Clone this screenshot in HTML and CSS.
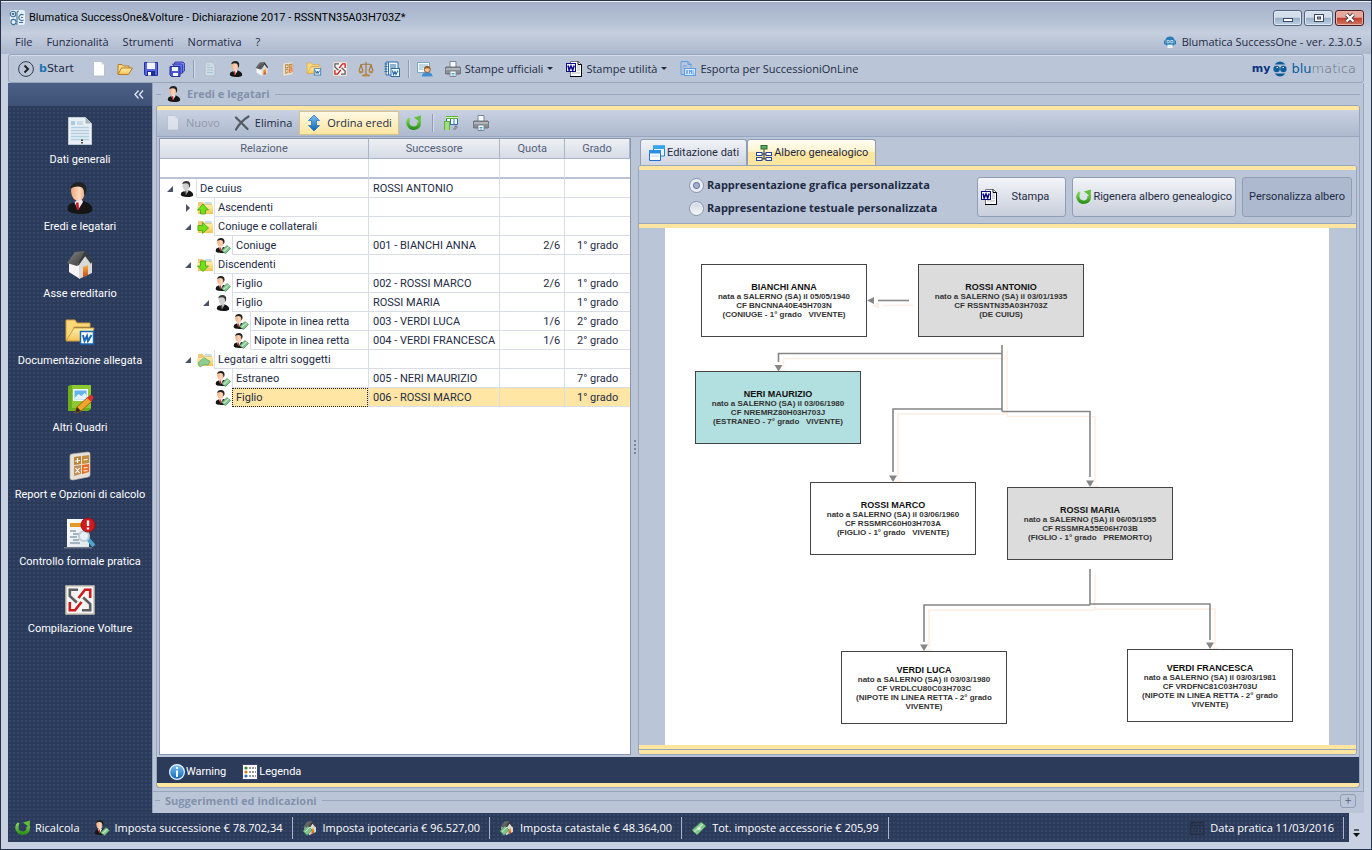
FILE: index.html
```html
<!DOCTYPE html>
<html lang="it">
<head>
  <meta charset="UTF-8" />
  <meta name="viewport" content="width=device-width, initial-scale=1.0"/>
  <title>Blumatica SuccessOne&amp;Volture</title>
  <link rel="stylesheet" href="styles.css">
</head>
<body>

  <!-- icon sprite -->
  <svg class="sprite" aria-hidden="true">
    <defs>
      <linearGradient id="g-skin" x1="0" y1="0" x2="1" y2="0"><stop offset="0" stop-color="#f4a877"/><stop offset=".6" stop-color="#fdd9c0"/><stop offset="1" stop-color="#e9a67c"/></linearGradient>
      <linearGradient id="g-folder" x1="0" y1="0" x2="0" y2="1"><stop offset="0" stop-color="#fff0ae"/><stop offset="1" stop-color="#f3c352"/></linearGradient>
      <linearGradient id="g-green" x1="0" y1="0" x2="0" y2="1"><stop offset="0" stop-color="#8fe05a"/><stop offset="1" stop-color="#1f8a12"/></linearGradient>
      <linearGradient id="g-blue" x1="0" y1="0" x2="0" y2="1"><stop offset="0" stop-color="#7cc4f6"/><stop offset="1" stop-color="#0b63b8"/></linearGradient>
      <linearGradient id="g-page" x1="0" y1="0" x2="1" y2="1"><stop offset="0" stop-color="#ffffff"/><stop offset="1" stop-color="#dfe5ea"/></linearGradient>
      <linearGradient id="g-roof" x1="0" y1="0" x2="1" y2="1"><stop offset="0" stop-color="#8a8a8a"/><stop offset="1" stop-color="#333333"/></linearGradient>
      <linearGradient id="g-orange" x1="0" y1="0" x2="0" y2="1"><stop offset="0" stop-color="#f7b049"/><stop offset="1" stop-color="#c74a0b"/></linearGradient>
    </defs>

    <symbol id="i-app" viewBox="0 0 16 16"><rect x="1" y="0" width="15" height="15" rx="2" fill="#e6eff6"/><g fill="none" stroke="#3f7196" stroke-width="1.100"><circle cx="4" cy="4" r="2.800"/><circle cx="4" cy="4" r=".8"/><circle cx="4.500" cy="12" r="2.600"/><path d="M8 15V3q0-2 2-2M14.500 5a3 3 0 1 0 0 5M14 7.500h-2M14 12.500h-4"/></g></symbol>
    <symbol id="i-page" viewBox="0 0 16 16"><path d="M2.500.500h8l3 3V15h-11z" fill="#fdfdfd" stroke="#b4b9bf" stroke-width=".8"/><path d="M10.500.500v3h3z" fill="#d5d9de"/></symbol>
    <symbol id="i-open" viewBox="0 0 16 16"><path d="M1 13V3.500h4l1.500 1.500H12V7" fill="#fbdc86" stroke="#b97a23"/><path d="M1 13.500 4.500 7H15.500l-4 6.500z" fill="url(#g-folder)" stroke="#b97a23"/></symbol>
    <symbol id="i-save" viewBox="0 0 16 16"><path d="M1.500 1.500h13v13h-12l-1-1z" fill="#5a67dc" stroke="#2331a0"/><path d="M4 1.500h8V8H4z" fill="#f2f5ff"/><path d="M4 10h8v4.500H4z" fill="#202c8c"/><path d="M5 11h3v3.500H5z" fill="#fff"/></symbol>
    <symbol id="i-saveall" viewBox="0 0 16 16"><path d="M6 1h8l1.500 1.500V10L13 12 5 4z" fill="#7b85ea" stroke="#2331a0" stroke-width=".8"/><path d="M3.500 3h9l1 1v8l-3 1z" fill="#6a75e4" stroke="#2331a0" stroke-width=".8"/><path d="M1 5.500h10v10H2.500L1 14z" fill="#4a58d8" stroke="#2331a0"/><path d="M3 6h6v4H3z" fill="#f2f5ff"/><path d="M4 12h5v3H4z" fill="#fff"/></symbol>
    <symbol id="i-data" viewBox="-4 -2 32 32"><path d="M.5.500h17l6 6v21H.500z" fill="#e9eff3" stroke="#c3ccd2"/><path d="M17.500.500v6h6z" fill="#aab4bb"/><rect x="3" y="4" width="4" height="4" fill="#a9cbe0"/><rect x="9" y="4" width="6" height="4" fill="#c6dbe8"/><path d="M3 10.500h18M3 13.500h18M3 16.500h18M3 19.500h18M3 22.500h18" stroke="#b0cfe1" stroke-width="1.600"/><path d="M14 22.500v1.500m0 1v1.500" stroke="#222" stroke-width="1.600"/></symbol>
    <symbol id="i-data-ghost" viewBox="0 0 16 16"><path d="M3 1h7l3 3v11H3z" fill="#cfdae2" stroke="#a9b8c4" stroke-width=".8"/><path d="M5 4h3M5 6.500h6M5 9h6M5 11.500h6" stroke="#a3c6d8"/></symbol>
    <symbol id="i-person" viewBox="-2 0 30 32"><path d="M.5 27q0-5 5-6L10 19h7l4 2q4.500 2 4.500 7-1 4-12 4Q.5 31.500.500 27z" fill="#151515"/><path d="M7.500 20.500 10 18h5l1 2-5 8z" fill="#ededed"/><path d="M9 20.500h2.500l.5 8-2.500-1.500z" fill="#c4161c"/><path d="M4 9q0-7 7-7t7 7.500q-.5 8-6 10Q4.500 18.500 4 9z" fill="url(#g-skin)"/><path d="M3.500 6.500Q4.500 0 12 0q7.500.3 7.500 7.500 0 4-2.500 6 .5-6-2-8-5-2.500-11.500 1z" fill="#222"/></symbol>
    <symbol id="i-person-gray" viewBox="-2 0 30 32"><path d="M.5 27q0-5 5-6L10 19h7l4 2q4.500 2 4.500 7-1 4-12 4Q.5 31.500.500 27z" fill="#151515"/><path d="M7.500 20.500 10 18h5l1 2-5 8z" fill="#c8c8c8"/><path d="M9 20.500h2.500l.5 8-2.500-1.500z" fill="#444"/><path d="M4 9q0-7 7-7t7 7.500q-.5 8-6 10Q4.500 18.500 4 9z" fill="#cfcfcf"/><path d="M3.500 6.500Q4.500 0 12 0q7.500.3 7.500 7.500 0 4-2.500 6 .5-6-2-8-5-2.500-11.500 1z" fill="#3a3a3a"/></symbol>
    <symbol id="i-cash" viewBox="0 0 16 16"><path d="M1 10 10 2l5 4-9 9z" fill="#82c68c" stroke="#3f8d52" stroke-width=".8"/><path d="M3 12 12 4" stroke="#bfe5c2" stroke-width="1.400"/><circle cx="8" cy="8.500" r="1.800" fill="#d7f0d8"/></symbol>
    <symbol id="i-person-cash" viewBox="0 0 16 16"><use href="#i-person" x="-1" y="0" width="15" height="15"/><path d="m6.500 12.500 5.500-5 3.500 3-5 5z" fill="#7fc28a" stroke="#488f58" stroke-width=".7"/><path d="m8.500 13.500 5-4.500" stroke="#c4e7c8" stroke-width="1.200"/></symbol>
    <symbol id="i-house" viewBox="-3 -1 32 32"><path d="M2 13v9l11 7V13z" fill="#f5f5f5"/><path d="M12 29V14l7-9 6 8v10z" fill="#d9d9d9"/><path d="M16 17l5-2v10l-5 2z" fill="url(#g-orange)"/><path d="M0 13 8 2l10-1-8 15z" fill="url(#g-roof)"/><path d="m18 1 7 10-1 3-6-8-6 9-2 1z" fill="#3c3c3c"/></symbol>
    <symbol id="i-house-cash" viewBox="0 0 16 16"><use href="#i-house" x="0" y="0" width="16" height="16"/><path d="m1 11 5-5 4 4-5 5.500z" fill="#7fc28a" stroke="#488f58" stroke-width=".7"/><path d="m3 12 5-5" stroke="#c4e7c8"/></symbol>
    <symbol id="i-folder-word" viewBox="-1 -3 32 32"><path d="M1 21V1h9l2 3h13v4H9L5 21z" fill="#fbd978" stroke="#d19b3d"/><path d="m1 22 8-13h20l-3 13z" fill="url(#g-folder)" stroke="#d19b3d"/><rect x="15.500" y="12.500" width="13" height="12.500" fill="#fff" stroke="#1767b1" stroke-width="1.500"/><path d="m18 16 1.500 6 2.500-5 1 5 3.500-6" fill="none" stroke="#1767b1" stroke-width="2"/></symbol>
    <symbol id="i-album" viewBox="-3 -1 32 32"><path d="M1 2 4 1h20v24l-3 2H1z" fill="#6fae1b"/><path d="M5 1h19v23H5z" fill="#8cc832"/><rect x="6" y="5" width="15" height="12" fill="#f3f8ff"/><rect x="7.500" y="6.500" width="12" height="9" fill="#61b5ea"/><path d="m7.500 14 4-4 3 2 3-3 2 2v4.500h-12z" fill="#e4f4fd"/><path d="m8 29 2-6 11-10 4 4-11 10z" fill="#f2a42c" stroke="#a8641a"/><path d="m10 23 4 4-6 2z" fill="#3a2a22"/><path d="m20 14 3-3q2-.5 3 1.500t0 2.500l-2 2.500z" fill="#dd3030"/></symbol>
    <symbol id="i-calc" viewBox="-5 -2 32 32"><path d="M1 4Q1 2 3 2l16-2q2 0 2 2v21q0 1.500-2 2L4 28q-3 0-3-2z" fill="#e6e2db" stroke="#bdb5a8" stroke-width=".7"/><path d="M5 5l7-1v8l-7 1z" fill="#b88438"/><path d="m13 4 7-1v8l-7 1z" fill="#c78d3b"/><path d="m5 14 7-1v9l-7 2z" fill="#c39056"/><path d="m13 13 7-1v8l-7 2z" fill="#ee6a1f"/><path d="M8.500 6v5M6 9l5-.5M14.500 8l4-.6M6.500 16l4 5m0-5-4 5M14.500 16l4-.5m-4 3.500 4-.5" stroke="#fff" stroke-width="1.200"/></symbol>
    <symbol id="i-check" viewBox="0 0 32 32"><path d="M0 30h28v1.500H0z" fill="#aaa" opacity=".5"/><path d="M3 2h22v28H3z" fill="url(#g-page)"/><rect x="6" y="6" width="13" height="4" fill="#e59a25"/><path d="M6 14h6M9 17h7M6 20h7M9 23h6M6 26h10" stroke="#8aa0af" stroke-width="1.300"/><path d="m24 22 6 7" stroke="#4ba4cc" stroke-width="4"/><circle cx="20" cy="19" r="5" fill="#e5f1f7" stroke="#bccbd3" stroke-width="2"/><circle cx="24" cy="8" r="7" fill="#cf1b1f" stroke="#961015"/><path d="M24 3.500v5.500M24 10.500v2" stroke="#fff" stroke-width="2.400"/></symbol>
    <symbol id="i-volture" viewBox="-1 -1 32 32"><rect x="1" y="1" width="28" height="28" fill="#f4f4f4" stroke="#c9c3b6" stroke-width="1.500"/><g fill="none" stroke-width="2.600"><path d="M13 4.800H4.800V11l7 6.500" stroke="#5d5d5d"/><path d="M17 25.200h8.200V19l-7-6.500" stroke="#5d5d5d"/><path d="M25.200 13V4.800H20L13.500 13" stroke="#cb1d1c"/><path d="M4.800 17v8.200H10l6.500-8.200" stroke="#cb1d1c"/></g></symbol>
    <symbol id="i-scales" viewBox="0 0 16 16"><g fill="none" stroke="#a5793c" stroke-width="1.200"><path d="M8 1v12M2 4q6-2 12 0M4 14.500h8M3 4 1 10M3 4l2 6M13 4l-2 6M13 4l2 6"/></g><path d="M.5 10h5q-.5 2.500-2.500 2.500T.500 10zM10.500 10h5q-.5 2.500-2.500 2.500T10.500 10zM5.500 13h5l1 2.500h-7z" fill="#b98a4a"/></symbol>
    <symbol id="i-notebook" viewBox="0 0 16 16"><path d="M2 1h12v13H2z" fill="#f4f8fc" stroke="#2a6ba8"/><path d="M4.500 1v13M6 4h6M6 6h6" stroke="#2a6ba8"/><path d="M.5 3h3m-3 2.500h3m-3 2.500h3m-3 2.500h3" stroke="#2a6ba8"/><rect x="7" y="7.500" width="8.500" height="8" fill="#fff" stroke="#2a6ba8"/><path d="m8.500 9.500 1 4L11 10.500l1 3 2-4" fill="none" stroke="#2a6ba8" stroke-width="1.200"/></symbol>
    <symbol id="i-contact" viewBox="0 0 16 16"><path d="M.5 1.500h12v10H.5z" fill="#f2f8fc" stroke="#7ba6c4"/><path d="M2 4h9M2 6h9M2 8h4" stroke="#8fb6d0"/><path d="M5 15.500q0-3.500 3-4h4q3.500.5 3.500 4z" fill="#3f8fd2"/><circle cx="10.300" cy="8.500" r="3" fill="#f3c9a2" stroke="#8d5524"/><path d="M7.300 8q0-3 3-3t3 3q-3-1.500-6 0z" fill="#9a5b22"/></symbol>
    <symbol id="i-print" viewBox="0 0 16 16"><path d="M5 .500h6v6H5z" fill="#f7f9fc" stroke="#7d8793"/><path d="M1 6h14l1 2v4q-.5 1-2 1H2q-1.500 0-2-1V8z" fill="#8c9097" stroke="#565b63" stroke-width=".8"/><path d="M1 8h14" stroke="#d6d9dd"/><path d="M5 10h6v5.500H5z" fill="#fff" stroke="#7d8793"/><path d="M6.500 12.500h3M6.500 14h3" stroke="#3fa3dc"/></symbol>
    <symbol id="i-word" viewBox="0 0 16 16"><path d="M4.500.500h8l3 3v12h-11z" fill="#fff" stroke="#777"/><path d="M4 15.500h11.500V3.500" fill="none" stroke="#000"/><path d="M12 .500v3h3.500" fill="none" stroke="#000"/><path d="M11 5h3M11 7h3M11 9h3M6 12h8" stroke="#b5b5b5"/><rect x=".5" y="2.500" width="9" height="8" fill="#fff" stroke="#0a0a8c"/><path d="m2 4.500 1.200 4.500L5 5l1.700 4L8.200 4.500" fill="none" stroke="#0a0a8c" stroke-width="1.600"/></symbol>
    <symbol id="i-xml" viewBox="0 0 16 16"><path d="M4 13.500H1V.500h7l3 3v3" fill="none" stroke="#5b9ce8"/><path d="M8 .500v3h3M3 5h4M3 7h1" fill="none" stroke="#5b9ce8"/><rect x="4.500" y="7.500" width="11" height="7" fill="#dcebfb" stroke="#5b9ce8"/><path d="m6 9 2 4m0-4-2 4m3.500 0V9l1 2 1-2v4m1.500-4v4h1.500" fill="none" stroke="#5b9ce8" stroke-width=".9"/></symbol>
    <symbol id="i-refresh" viewBox="0 0 16 16"><path d="M2.500 2.500q-3 3-2 7Q2.500 15 8 15q7-.5 7-7.500 0-1-.5-2L11.500 7q0 4.500-4 4.500Q3.500 11 3.500 7.500q0-2.500 1-4z" fill="url(#g-green)"/><path d="M8 2.500 15 .500l-.5 7z" fill="#5ec034"/></symbol>
    <symbol id="i-delete" viewBox="0 0 16 16"><path d="M2 2.500 13.500 14M14.500 1.500Q7 6 2 14.500" fill="none" stroke="#545b66" stroke-width="2.200" stroke-linecap="round"/></symbol>
    <symbol id="i-sort" viewBox="0 0 16 16"><path d="m8 0 5.500 5.500H10.500v5h3L8 16l-5.500-5.500h3v-5h-3z" fill="url(#g-blue)" stroke="#1c6cb5" stroke-width=".7"/></symbol>
    <symbol id="i-table" viewBox="0 0 16 16"><path d="M3.500 1.500h11v8h-11z" fill="#fff" stroke="#2d6fc0"/><path d="M3 1h12v3H3z" fill="#5cb531"/><path d="M3 2.500h12" stroke="#d8f4c8"/><path d="M7.500 4v5M11 4v5" stroke="#2d6fc0"/><path d="M1 6h6v9H1z" fill="#5cb531"/><path d="M2 8h4M2 10h4M2 12h4M2 14h4" stroke="#eaffdd"/><path d="M10 14h3v-3m-1.500 1.500 1.500-2 1.500 2" fill="none" stroke="#777"/></symbol>
    <symbol id="i-forms" viewBox="0 0 16 16"><path d="M4.500 1h11v10h-11z" fill="#eaf5ff" stroke="#1f86d6"/><path d="M4 .500h12v3.500H4z" fill="#35a6ee"/><path d="M.5 6h11v9.500H.5z" fill="#fff" stroke="#1f6fd0"/><path d="M0 5h12v3.500H0z" fill="#2c8fe6"/><path d="M2 11h8" stroke="#b9d6f0"/></symbol>
    <symbol id="i-tree" viewBox="0 0 16 16"><path d="M8 4v10M6 9h4M6 14h4" fill="none" stroke="#333"/><rect x="5" y=".5" width="6" height="3.500" fill="#5aad5c" stroke="#2c6b33"/><g fill="#fff" stroke="#26489c"><rect x=".5" y="7.500" width="5.500" height="3"/><rect x=".5" y="12.500" width="5.500" height="3"/><rect x="10" y="7.500" width="5.500" height="3"/><rect x="10" y="12.500" width="5.500" height="3"/></g></symbol>
    <symbol id="i-info" viewBox="0 0 16 16"><circle cx="8" cy="8" r="7.400" fill="url(#g-blue)" stroke="#e8f4ff" stroke-width="1.200"/><path d="M8 3v2M8 6.500V13" stroke="#fff" stroke-width="2"/></symbol>
    <symbol id="i-legend" viewBox="0 0 16 16"><path d="M.5.500h15v15H.500z" fill="#fff" stroke="#3f4470"/><path d="M7 4h2m1 0h2m1 0h1M7 8h2m1 0h2m1 0h1M7 12h2m1 0h2m1 0h1" stroke="#333"/><circle cx="4" cy="4" r="1.600" fill="#2e8b2e"/><circle cx="4" cy="8" r="1.600" fill="#e07b18"/><circle cx="4" cy="12" r="1.600" fill="#2a6fd0"/></symbol>
    <symbol id="i-folder" viewBox="0 0 16 16"><path d="M1 14V2h5l1 1.500h8V14z" fill="#f2c77a"/><path d="M8 2h6.500v2H8z" fill="#bfe0f5"/><path d="M0 6h5l1-1h10v9H1z" fill="url(#g-folder)"/></symbol>
    <symbol id="i-folder-up" viewBox="0 0 16 16"><use href="#i-folder"/><path d="m6 4 5.500 6h-3v4h-5v-4h-3z" fill="#6fe019" stroke="#3a9a0c" stroke-width=".7"/></symbol>
    <symbol id="i-folder-right" viewBox="0 0 16 16"><use href="#i-folder"/><path d="m11.500 9-6 5.500v-3H1v-5h4.500v-3z" fill="#6fe019" stroke="#3a9a0c" stroke-width=".7"/></symbol>
    <symbol id="i-folder-down" viewBox="0 0 16 16"><use href="#i-folder"/><path d="M6 14.500.500 9h3V4h5v5h3z" fill="#6fe019" stroke="#3a9a0c" stroke-width=".7"/></symbol>
    <symbol id="i-folder-cash" viewBox="0 0 16 16"><use href="#i-folder"/><path d="m1 11 6-5.500 6 4-2 3.500-4-.5-4 2.500z" fill="#8ccc95" stroke="#5aa269" stroke-width=".7"/></symbol>
    <symbol id="i-calendar" viewBox="0 0 16 16"><g fill="none" stroke="#262f45" stroke-width="1.400"><path d="M1.500 2.500h13v12h-13zM1 5.500h14M4.500 1v3M11.500 1v3"/><path d="M4 8h8M4 11h8" stroke-dasharray="2 1"/></g></symbol>
    <symbol id="i-start" viewBox="0 0 16 16"><circle cx="8" cy="8" r="7.400" fill="none" stroke="#333a46"/><path d="m6.500 4.500 3.500 3.500-3.500 3.500" fill="none" stroke="#222" stroke-width="2"/></symbol>
    <symbol id="i-robot" viewBox="0 0 16 16"><path d="M2.500 3.500Q5 .500 8 .500t5.500 3z" fill="#0d5d9c"/><path d="M2.500 12.500Q5 15.500 8 15.500t5.500-3z" fill="#0d5d9c"/><circle cx="4.600" cy="8" r="3.200" fill="#0d5d9c"/><circle cx="11.400" cy="8" r="3.200" fill="#0d5d9c"/><path d="M4.500 6.500h1.500M10.500 6.500H12" stroke="#e8f1f8"/></symbol>
    <symbol id="i-robot-small" viewBox="0 0 16 16"><path d="M2 5q1-4.500 6-4.500T14 5v6q-2 3.500-6 3.500T2 11z" fill="#2c7db5"/><path d="M0 6h2v5H0zM14 6h2v5h-2z" fill="#2c7db5"/><path d="M4 6h3v3H4zM9 6h3v3H9z" fill="none" stroke="#e7f2fa"/><path d="M4.500 11.500h7V16h-7z" fill="#e7f2fa"/></symbol>
  </svg>

  <div class="window">
    <header class="top">
      <div class="titlebar">
        <svg class="ico"><use href="#i-app"/></svg>
        <h1>Blumatica SuccessOne&amp;Volture - Dichiarazione 2017 - RSSNTN35A03H703Z*</h1>
        <div class="win-buttons">
          <button class="win-btn" aria-label="Riduci"><svg viewBox="0 0 12 10"><rect x="1.500" y="5.500" width="9" height="3" fill="#fff" stroke="#3b4763"/></svg></button>
          <button class="win-btn" aria-label="Ingrandisci"><svg viewBox="0 0 12 10"><rect x="1.500" y="1.500" width="9" height="7" fill="#fff" stroke="#3b4763"/><rect x="4.500" y="4" width="3" height="2" fill="#9db3cd" stroke="#3b4763"/></svg></button>
          <button class="win-btn close" aria-label="Chiudi"><svg viewBox="0 0 12 10"><path d="m2.500 1.500 7 7m0-7-7 7" stroke="#4a3b48" stroke-width="4"/><path d="m2.500 1.500 7 7m0-7-7 7" stroke="#fff" stroke-width="2.200"/></svg></button>
        </div>
      </div>
      <nav class="menubar">
        <button>File</button>
        <button>Funzionalità</button>
        <button>Strumenti</button>
        <button>Normativa</button>
        <button>?</button>
        <span class="version"><svg class="ico-sm"><use href="#i-robot-small"/></svg>Blumatica SuccessOne - ver. 2.3.0.5</span>
      </nav>
    </header>

    <div class="frame">
      <div class="toolbar">
        <button class="tool start"><svg class="ico"><use href="#i-start"/></svg><span><b>b</b>Start</span></button>
        <button class="tool" aria-label="Nuovo"><svg class="ico"><use href="#i-page"/></svg></button>
        <button class="tool" aria-label="Apri"><svg class="ico"><use href="#i-open"/></svg></button>
        <button class="tool" aria-label="Salva"><svg class="ico"><use href="#i-save"/></svg></button>
        <button class="tool" aria-label="Salva tutto"><svg class="ico"><use href="#i-saveall"/></svg></button>
        <span class="sep"></span>
        <button class="tool" aria-label="Dati generali"><svg class="ico"><use href="#i-data-ghost"/></svg></button>
        <button class="tool" aria-label="Eredi"><svg class="ico"><use href="#i-person"/></svg></button>
        <button class="tool" aria-label="Asse ereditario"><svg class="ico"><use href="#i-house"/></svg></button>
        <button class="tool" aria-label="Report"><svg class="ico"><use href="#i-calc"/></svg></button>
        <button class="tool" aria-label="Documentazione"><svg class="ico"><use href="#i-folder-word"/></svg></button>
        <button class="tool" aria-label="Volture"><svg class="ico"><use href="#i-volture"/></svg></button>
        <button class="tool" aria-label="Normativa"><svg class="ico"><use href="#i-scales"/></svg></button>
        <button class="tool" aria-label="Modelli"><svg class="ico"><use href="#i-notebook"/></svg></button>
        <span class="sep"></span>
        <button class="tool" aria-label="Anagrafica"><svg class="ico"><use href="#i-contact"/></svg></button>
        <button class="tool wide"><svg class="ico"><use href="#i-print"/></svg>Stampe ufficiali<i class="caret"></i></button>
        <button class="tool wide"><svg class="ico"><use href="#i-word"/></svg>Stampe utilità<i class="caret"></i></button>
        <button class="tool wide"><svg class="ico"><use href="#i-xml"/></svg>Esporta per SuccessioniOnLine</button>
        <a class="brand" href="#"><b>my</b><svg class="ico"><use href="#i-robot"/></svg><span class="blu">blu</span><span class="matica">matica</span></a>
      </div>

      <div class="body">
        <aside class="sidebar">
          <button class="collapse" aria-label="Comprimi"><svg viewBox="0 0 10 9"><path d="M4.500.500 1 4.500l3.500 4M9 .500 5.500 4.500 9 8.500" fill="none" stroke="#dbe3f0" stroke-width="1.400"/></svg></button>
          <nav class="side-nav">
            <a href="#"><svg><use href="#i-data"/></svg>Dati generali</a>
            <a href="#"><svg><use href="#i-person"/></svg>Eredi e legatari</a>
            <a href="#"><svg><use href="#i-house"/></svg>Asse ereditario</a>
            <a href="#"><svg><use href="#i-folder-word"/></svg>Documentazione allegata</a>
            <a href="#"><svg><use href="#i-album"/></svg>Altri Quadri</a>
            <a href="#"><svg><use href="#i-calc"/></svg>Report e Opzioni di calcolo</a>
            <a href="#"><svg><use href="#i-check"/></svg>Controllo formale pratica</a>
            <a href="#"><svg><use href="#i-volture"/></svg>Compilazione Volture</a>
          </nav>
        </aside>

        <main class="content">
          <section class="group">
            <h2 class="legend"><svg class="ico"><use href="#i-person"/></svg>Eredi e legatari</h2>
            <div class="panel">
              <div class="actions">
                <button class="action" disabled><svg class="ico"><use href="#i-page"/></svg>Nuovo</button>
                <button class="action"><svg class="ico"><use href="#i-delete"/></svg>Elimina</button>
                <button class="action hot"><svg class="ico"><use href="#i-sort"/></svg>Ordina eredi</button>
                <button class="action" aria-label="Aggiorna"><svg class="ico"><use href="#i-refresh"/></svg></button>
                <span class="sep"></span>
                <button class="action" aria-label="Esporta tabella"><svg class="ico"><use href="#i-table"/></svg></button>
                <button class="action" aria-label="Stampa elenco"><svg class="ico"><use href="#i-print"/></svg></button>
              </div>

              <div class="work">
                <div class="grid-box">
                  <table class="heirs">
                    <colgroup><col class="c-rel"><col class="c-suc"><col class="c-num"><col class="c-num"></colgroup>
                    <thead>
                      <tr><th>Relazione</th><th>Successore</th><th>Quota</th><th>Grado</th></tr>
                      <tr class="filter">
                        <td><input type="text" aria-label="Filtra relazione"></td>
                        <td><input type="text" aria-label="Filtra successore"></td>
                        <td><input type="text" aria-label="Filtra quota"></td>
                        <td><input type="text" aria-label="Filtra grado"></td>
                      </tr>
                    </thead>
                    <tbody>
                      <tr><td><div class="node lvl-0"><i class="tw open"></i><svg class="ico"><use href="#i-person-gray"/></svg><span>De cuius</span></div></td><td>ROSSI ANTONIO</td><td></td><td></td></tr>
                      <tr><td><div class="node lvl-1"><i class="tw shut"></i><svg class="ico"><use href="#i-folder-up"/></svg><span>Ascendenti</span></div></td><td></td><td></td><td></td></tr>
                      <tr><td><div class="node lvl-1"><i class="tw open"></i><svg class="ico"><use href="#i-folder-right"/></svg><span>Coniuge e collaterali</span></div></td><td></td><td></td><td></td></tr>
                      <tr><td><div class="node lvl-2"><i class="tw"></i><svg class="ico"><use href="#i-person-cash"/></svg><span>Coniuge</span></div></td><td>001 - BIANCHI ANNA</td><td>2/6</td><td>1° grado</td></tr>
                      <tr><td><div class="node lvl-1"><i class="tw open"></i><svg class="ico"><use href="#i-folder-down"/></svg><span>Discendenti</span></div></td><td></td><td></td><td></td></tr>
                      <tr><td><div class="node lvl-2"><i class="tw"></i><svg class="ico"><use href="#i-person-cash"/></svg><span>Figlio</span></div></td><td>002 - ROSSI MARCO</td><td>2/6</td><td>1° grado</td></tr>
                      <tr><td><div class="node lvl-2"><i class="tw open"></i><svg class="ico"><use href="#i-person-gray"/></svg><span>Figlio</span></div></td><td>ROSSI MARIA</td><td></td><td>1° grado</td></tr>
                      <tr><td><div class="node lvl-3"><i class="tw"></i><svg class="ico"><use href="#i-person-cash"/></svg><span>Nipote in linea retta</span></div></td><td>003 - VERDI LUCA</td><td>1/6</td><td>2° grado</td></tr>
                      <tr><td><div class="node lvl-3"><i class="tw"></i><svg class="ico"><use href="#i-person-cash"/></svg><span>Nipote in linea retta</span></div></td><td>004 - VERDI FRANCESCA</td><td>1/6</td><td>2° grado</td></tr>
                      <tr><td><div class="node lvl-1"><i class="tw open"></i><svg class="ico"><use href="#i-folder-cash"/></svg><span>Legatari e altri soggetti</span></div></td><td></td><td></td><td></td></tr>
                      <tr><td><div class="node lvl-2"><i class="tw"></i><svg class="ico"><use href="#i-person-cash"/></svg><span>Estraneo</span></div></td><td>005 - NERI MAURIZIO</td><td></td><td>7° grado</td></tr>
                      <tr class="selected"><td><div class="node lvl-2"><i class="tw"></i><svg class="ico"><use href="#i-person-cash"/></svg><span>Figlio</span></div></td><td>006 - ROSSI MARCO</td><td></td><td>1° grado</td></tr>
                    </tbody>
                  </table>
                </div>

                <div class="splitter"><i></i><i></i><i></i><i></i></div>

                <div class="detail">
                  <div class="tabs" role="tablist">
                    <button role="tab" aria-selected="false"><svg class="ico"><use href="#i-forms"/></svg>Editazione dati</button>
                    <button role="tab" aria-selected="true"><svg class="ico"><use href="#i-tree"/></svg>Albero genealogico</button>
                  </div>
                  <div class="tab-page">
                    <div class="options">
                      <div class="radios">
                        <label><input type="radio" name="rap" checked>Rappresentazione grafica personalizzata</label>
                        <label><input type="radio" name="rap">Rappresentazione testuale personalizzata</label>
                      </div>
                      <div class="big-buttons">
                        <button class="big print"><svg class="ico"><use href="#i-word"/></svg><span>Stampa</span></button>
                        <button class="big"><svg class="ico"><use href="#i-refresh"/></svg>Rigenera albero genealogico</button>
                        <button class="big pressed">Personalizza albero</button>
                      </div>
                    </div>
                    <div class="canvas">
                      <div class="sheet">
                        <div class="diagram">
                          <svg class="links" viewBox="0 0 664 516">
                            <defs>
                              <g id="links" fill="none" stroke-width="1.600">
                                <path d="M244 72.500h-31"/>
                                <path d="M337 117v66.500M337 125.500H113.500v8.500"/>
                                <path d="M337 181H228v63"/>
                                <path d="M337 183.500h88V249"/>
                                <path d="M425 341v36M425 377H259v37"/>
                                <path d="M425 376h120v36"/>
                              </g>
                              <g id="heads">
                                <path d="M202 72.500l7-3.500v7z"/>
                                <path d="M113.500 143.500l-4-6.500h8z"/>
                                <path d="M228 254l-4-6.500h8z"/>
                                <path d="M425 259l-4-6.500h8z"/>
                                <path d="M259 423l-4-6.500h8z"/>
                                <path d="M545 421l-4-6.500h8z"/>
                              </g>
                            </defs>
                            <use href="#links" x="5" y="5" stroke="#fdeee3"/>
                            <use href="#heads" x="5" y="5" fill="#fdeee3"/>
                            <use href="#links" stroke="#868686"/>
                            <use href="#heads" fill="#868686"/>
                          </svg>
                          <div class="person p-anna"><strong>BIANCHI ANNA</strong>nata a SALERNO (SA) il 05/05/1940<br>CF BNCNNA40E45H703N<br>(CONIUGE - 1° grado &nbsp; VIVENTE)</div>
                          <div class="person p-antonio dead"><strong>ROSSI ANTONIO</strong>nato a SALERNO (SA) il 03/01/1935<br>CF RSSNTN35A03H703Z<br>(DE CUIUS)</div>
                          <div class="person p-maurizio other"><strong>NERI MAURIZIO</strong>nato a SALERNO (SA) il 03/06/1980<br>CF NREMRZ80H03H703J<br>(ESTRANEO - 7° grado &nbsp; VIVENTE)</div>
                          <div class="person p-marco"><strong>ROSSI MARCO</strong>nato a SALERNO (SA) il 03/06/1960<br>CF RSSMRC60H03H703A<br>(FIGLIO - 1° grado &nbsp; VIVENTE)</div>
                          <div class="person p-maria dead"><strong>ROSSI MARIA</strong>nato a SALERNO (SA) il 06/05/1955<br>CF RSSMRA55E06H703B<br>(FIGLIO - 1° grado &nbsp; PREMORTO)</div>
                          <div class="person p-luca"><strong>VERDI LUCA</strong>nato a SALERNO (SA) il 03/03/1980<br>CF VRDLCU80C03H703C<br>(NIPOTE IN LINEA RETTA - 2° grado<br>VIVENTE)</div>
                          <div class="person p-francesca"><strong>VERDI FRANCESCA</strong>nato a SALERNO (SA) il 03/03/1981<br>CF VRDFNC81C03H703U<br>(NIPOTE IN LINEA RETTA - 2° grado<br>VIVENTE)</div>
                        </div>
                      </div>
                    </div>
                  </div>
                </div>
              </div>

              <div class="panel-foot">
                <button><svg class="ico"><use href="#i-info"/></svg>Warning</button>
                <button><svg class="ico"><use href="#i-legend"/></svg>Legenda</button>
              </div>
            </div>
          </section>
          <section class="hints">
            <h2 class="legend">Suggerimenti ed indicazioni</h2>
            <button class="expand" aria-label="Espandi">+</button>
          </section>
        </main>
      </div>

      <footer class="status">
        <button class="recalc"><svg class="ico"><use href="#i-refresh"/></svg>Ricalcola</button>
        <span class="cell"><svg class="ico"><use href="#i-person-cash"/></svg>Imposta successione € 78.702,34</span>
        <span class="cell"><svg class="ico"><use href="#i-house-cash"/></svg>Imposta ipotecaria € 96.527,00</span>
        <span class="cell"><svg class="ico"><use href="#i-house-cash"/></svg>Imposta catastale € 48.364,00</span>
        <span class="cell"><svg class="ico"><use href="#i-cash"/></svg>Tot. imposte accessorie € 205,99</span>
        <span class="cell date"><svg class="ico"><use href="#i-calendar"/></svg>Data pratica 11/03/2016</span>
        <button class="overflow" aria-label="Altri comandi"><svg viewBox="0 0 7 8"><path d="M1 1h5" stroke="#111" stroke-width="1.200"/><path d="M0 4h7L3.500 8z" fill="#111"/></svg></button>
      </footer>
    </div>
  </div>

</body>
</html>
```
FILE: styles.css
```css
* {
  box-sizing: border-box;
}

body {
  margin: 0;
  font-family: Roboto, "Liberation Sans", sans-serif;
  font-size: 11px;
  line-height: 14px;
  color: #1e2b44;
}

button, input {
  font: inherit;
  color: inherit;
  margin: 0;
}

button {
  border: 0;
  padding: 0;
  background: none;
  white-space: nowrap;
}

a {
  color: inherit;
  text-decoration: none;
}

h1, h2 {
  margin: 0;
  font-size: 11px;
}

.sprite {
  position: absolute;
  width: 0;
  height: 0;
}

.ico {
  width: 16px;
  height: 16px;
  flex: none;
}

.ico-sm {
  width: 12px;
  height: 12px;
}

.window {
  min-height: 100vh;
  display: flex;
  flex-direction: column;
  background: #c8d1e1;
  border: 1px solid #26314b;
}

/* title and menu */
.top {
  font-family: "Open Sans", "Noto Sans", sans-serif;
  padding: 0 7px;
  background: linear-gradient(#a5b1ca, #b6c2d5 40%, #c6cfdf 60%, #abb7cd);
  border-top: 1px solid #eef2f8;
}

.titlebar {
  display: flex;
  align-items: center;
  gap: 4px;
  height: 28px;
  padding: 3px 0 0 1px;
}

.titlebar h1 {
  font-family: Roboto, "Liberation Sans", sans-serif;
  font-weight: 400;
  color: #000;
}

.win-buttons {
  display: flex;
  gap: 2px;
  margin-left: auto;
}

.win-btn {
  width: 29px;
  height: 16px;
  display: flex;
  align-items: center;
  justify-content: center;
  border: 1px solid #56657f;
  border-radius: 3px;
  background: linear-gradient(#d3deea 45%, #98afc9 50%, #bdd0e2);
  box-shadow: inset 0 0 0 1px #dfe8f2;
}

.win-btn svg {
  width: 12px;
  height: 10px;
}

.win-btn.close {
  border-color: #4a1c22;
  background: linear-gradient(#e7a89c 45%, #bd3f2b 50%, #d27763);
  box-shadow: inset 0 0 0 1px #e9b0a5;
}

.menubar {
  display: flex;
  align-items: center;
  gap: 14px;
  height: 24px;
  padding: 0 2px 1px 7px;
}

.version {
  margin-left: auto;
  display: flex;
  align-items: center;
  gap: 6px;
}

/* main toolbar */
.frame {
  flex: 1;
  display: flex;
  flex-direction: column;
  margin: 0 7px 7px;
}

.toolbar {
  display: flex;
  align-items: center;
  height: 29px;
  background: #bac6d8;
  border: 1px solid #97a5bd;
  border-radius: 3px;
  box-shadow: inset 0 1px #d3dce8;
  font-family: "Open Sans", "Noto Sans", sans-serif;
}

.tool {
  display: flex;
  align-items: center;
  justify-content: center;
  width: 26px;
  height: 24px;
}

.tool.wide {
  width: auto;
  gap: 4px;
  padding: 0 6px 0 7px;
}

.tool.start {
  width: auto;
  gap: 5px;
  padding: 0 12px 0 9px;
  font-family: "DejaVu Sans", sans-serif;
}

.tool.start b {
  color: #1d73b5;
}

.sep {
  width: 1px;
  height: 18px;
  margin: 0 3px;
  background: #8f9db6;
  box-shadow: 1px 0 #d3dce8;
}

.caret {
  border: 3px solid transparent;
  border-top-color: #1e2b44;
  border-bottom-width: 0;
}

.brand {
  display: flex;
  align-items: center;
  margin: 0 7px 0 auto;
  font-family: "DejaVu Sans", sans-serif;
  font-size: 13px;
}

.brand b {
  font-size: 11px;
  color: #0a3480;
  margin-right: 2px;
}

.brand .blu {
  margin-left: 3px;
  color: #0d5d9c;
}

.brand .matica {
  color: #68707c;
  font-weight: 200;
}

/* sidebar */
.body {
  flex: 1;
  display: flex;
}

.sidebar, .status {
  background-color: #2c3b5a;
  background-image: radial-gradient(#34456a 1px, transparent 1px);
  background-size: 4px 4px;
}

.sidebar {
  width: 144px;
  flex: none;
  color: #fff;
}

.collapse {
  display: flex;
  align-items: center;
  justify-content: flex-end;
  width: 100%;
  height: 23px;
  padding: 0 8px;
  background: linear-gradient(#4c5f84, #3d5177);
}

.collapse svg {
  width: 10px;
  height: 9px;
}

.side-nav {
  display: flex;
  flex-direction: column;
  gap: 15px;
  padding-top: 9px;
}

.side-nav a {
  display: flex;
  flex-direction: column;
  align-items: center;
  gap: 6px;
  white-space: nowrap;
}

.side-nav svg {
  width: 32px;
  height: 32px;
}

/* content */
.content {
  flex: 1;
  min-width: 0;
  display: flex;
  flex-direction: column;
  background: #bac6d8;
  border-left: 1px solid #97a5bd;
}

.group {
  flex: 1;
  display: flex;
  flex-direction: column;
  padding: 0 3px 3px;
  border: 1px solid #97a5bd;
  border-width: 0 1px 1px 0;
}

.legend {
  display: flex;
  align-items: center;
  gap: 5px;
  height: 22px;
  font-family: "Open Sans", "Noto Sans", sans-serif;
  font-weight: 700;
  color: #8391ac;
}

.legend::before, .legend::after {
  content: "";
  height: 1px;
  width: 5px;
  background: #97a5bd;
}

.legend::after {
  flex: 1;
}

.panel {
  flex: 1;
  display: flex;
  flex-direction: column;
  border: 1px solid #97a5bd;
  border-radius: 3px;
  overflow: hidden;
}

.actions {
  display: flex;
  align-items: center;
  height: 31px;
  padding-left: 1px;
  border-top: 4px solid #ffe6a0;
  border-bottom: 1px solid #97a5bd;
  background: linear-gradient(#c9d2e2, #adb9ce);
  font-family: "Open Sans", "Noto Sans", sans-serif;
}

.action {
  display: flex;
  align-items: center;
  gap: 5px;
  height: 24px;
  padding: 0 6px;
  border: 1px solid transparent;
}

.action:disabled {
  color: #8f99ab;
}

.action:disabled .ico {
  opacity: .5;
}

.action.hot {
  border-color: #d6c48d;
  background: linear-gradient(#fff9e6, #fdf0c4 45%, #ffe6a0);
}

.work {
  flex: 1;
  display: flex;
  padding: 1px 2px 2px;
}

.grid-box {
  flex: 0 0 39.4%;
  min-width: 0;
  background: #fff;
  border: 1px solid #8896b0;
}

/* heirs table */
.heirs {
  width: 100%;
  border-collapse: separate;
  border-spacing: 0;
  table-layout: fixed;
}

.c-rel { width: 44.5%; }
.c-suc { width: 28%; }
.c-num { width: 13.8%; }

.heirs th, .heirs td {
  height: 19px;
  padding: 0 4px;
  border-right: 1px solid #d8dde8;
  border-bottom: 1px solid #d8dde8;
  line-height: 17px;
  white-space: nowrap;
}

.heirs th {
  height: 20px;
  font-weight: 400;
  color: #536079;
  background: linear-gradient(#eef0f4, #d6dbe5);
  border-color: #a9b5c8;
}

.heirs td:last-child {
  border-right: 0;
}

.heirs td:nth-child(3) {
  text-align: right;
}

.heirs td:nth-child(4) {
  text-align: center;
}

.heirs .filter td {
  height: 20px;
  padding: 0;
  border-bottom: 2px solid #b9c3d3;
}

.filter input {
  display: block;
  width: 100%;
  height: 17px;
  padding: 0 4px;
  border: 0;
  background: none;
}

.heirs tbody td:first-child {
  padding: 0;
  border-bottom: 0;
}

.node {
  display: flex;
  align-items: center;
  height: 19px;
}

.node span {
  flex: 1;
  height: 19px;
  margin-left: 1px;
  padding-left: 3px;
  border-left: 1px solid #d8dde8;
  border-bottom: 1px solid #d8dde8;
  line-height: 19px;
}

.lvl-0 { padding-left: 1px; }
.lvl-1 { padding-left: 19px; }
.lvl-2 { padding-left: 37px; }
.lvl-3 { padding-left: 55px; }

.tw {
  width: 18px;
  height: 19px;
  display: flex;
  align-items: center;
  justify-content: center;
}

.tw.open::before {
  content: "";
  border: 3px solid #4a5468;
  border-top-color: transparent;
  border-left-color: transparent;
}

.tw.shut::before {
  content: "";
  border: 4px solid transparent;
  border-left-color: #4a5468;
  border-right-width: 0;
}

.selected td {
  background: #ffe6a4;
}

.heirs .selected td:first-child {
  background: none;
}

.selected .node span {
  background: #ffe6a4;
  border: 1px dotted #222;
  line-height: 17px;
}

.splitter {
  flex: 0 0 7px;
  display: flex;
  flex-direction: column;
  align-items: center;
  justify-content: center;
  gap: 2px;
}

.splitter i {
  width: 2px;
  height: 2px;
  background: #7787a3;
}

/* right pane */
.detail {
  flex: 1;
  min-width: 0;
  display: flex;
  flex-direction: column;
}

.tabs {
  display: flex;
  padding: 1px 0 0 2px;
}

.tabs button {
  display: flex;
  align-items: center;
  gap: 2px;
  height: 26px;
  padding: 0 7px 0 8px;
  border: 1px solid #8f9db6;
  border-bottom: 0;
  border-radius: 3px 3px 0 0;
  background: linear-gradient(#f1f3f7, #cfd5e1);
}

.tabs button[aria-selected="true"] {
  background: linear-gradient(#fffdf4, #fff4cf 45%, #ffe6a0 50%);
}

.tab-page {
  flex: 1;
  display: flex;
  flex-direction: column;
  border: 1px solid #97a5bd;
  border-radius: 3px;
  background: #bac6d8;
  overflow: hidden;
}

.options {
  display: flex;
  align-items: center;
  justify-content: space-between;
  gap: 12px;
  min-height: 58px;
  padding: 0 4px 0 50px;
  border-top: 4px solid #ffe6a0;
  border-bottom: 1px solid #97a5bd;
}

.radios {
  display: flex;
  flex-direction: column;
  gap: 8px;
  font-family: "Open Sans", "Noto Sans", sans-serif;
  font-weight: 700;
}

.radios label {
  display: flex;
  align-items: center;
  gap: 3px;
  white-space: nowrap;
}

.radios input {
  appearance: none;
  width: 15px;
  height: 15px;
  border: 1px solid #8794ab;
  border-radius: 50%;
  background: linear-gradient(#cfd4de, #f7f8fa);
  box-shadow: inset 0 0 0 1px #f0f2f6;
}

.radios input:checked {
  background: radial-gradient(#a0afd0 2px, #6b7ba0 3px, #e8ebf1 4px);
}

.big-buttons {
  display: flex;
  gap: 6px;
}

.big {
  display: flex;
  align-items: center;
  justify-content: center;
  gap: 1px;
  height: 40px;
  padding: 0 3px;
  border: 1px solid #8f9db6;
  border-radius: 3px;
  background: linear-gradient(#f3f4f8, #dde1e9 50%, #c8cedb);
}

.big.print {
  width: 89px;
}

.big.print span {
  flex: 1;
}

.big.pressed {
  padding: 0 6px;
  background: #acb9ce;
}

.canvas {
  flex: 1;
  display: flex;
  margin-bottom: 5px;
  padding: 0 27px 0 26px;
  border-top: 4px solid #ffe6a0;
  border-bottom: 4px solid #ffe6a0;
  box-shadow: 0 1px #97a5bd, 0 5px #ffe6a0;
}

.sheet {
  flex: 1;
  display: flex;
  justify-content: center;
  background: #fff;
}

/* family tree: people are placed freely on the sheet */
.diagram {
  position: relative;
  width: 664px;
  height: 516px;
  flex: none;
}

.links {
  display: block;
  width: 664px;
  height: 516px;
}

.person {
  position: absolute;
  width: 166px;
  height: 73px;
  display: flow-root;
  align-content: center;
  text-align: center;
  font: 700 8px/9px "Liberation Sans", Arial, sans-serif;
  color: #333;
  background: #fff;
  border: 1px solid #444;
}

.person strong {
  display: block;
  font-size: 9px;
  line-height: 10px;
  color: #111;
}

.dead { background: #dcdcdc; }
.other { background: #b2dfdf; }

.p-anna { left: 36px; top: 36px; }
.p-antonio { left: 253px; top: 36px; }
.p-maurizio { left: 30px; top: 143px; }
.p-marco { left: 145px; top: 254px; }
.p-maria { left: 342px; top: 259px; }
.p-luca { left: 176px; top: 423px; }
.p-francesca { left: 462px; top: 421px; }

.panel-foot {
  display: flex;
  align-items: center;
  gap: 16px;
  height: 30px;
  padding: 4px 0 0 12px;
  background: #2c3b5a;
  border-bottom: 4px solid #ffe6a0;
  color: #fff;
}

.panel-foot button {
  display: flex;
  align-items: center;
  gap: 1px;
}

.hints {
  display: flex;
  align-items: center;
  height: 21px;
  padding: 0 8px 4px 2px;
}

.hints .legend {
  flex: 1;
  height: 16px;
}

.expand {
  width: 16px;
  height: 14px;
  line-height: 11px;
  border: 1px solid #8f9db6;
  border-radius: 3px;
  color: #5f6f8d;
}

/* status bar */
.status {
  display: flex;
  align-items: center;
  height: 29px;
  color: #fff;
  font-family: "Open Sans", "Noto Sans", sans-serif;
}

.recalc, .cell {
  display: flex;
  align-items: center;
  gap: 5px;
  height: 22px;
  white-space: nowrap;
}

.recalc {
  gap: 4px;
  padding: 0 5px 0 7px;
}

.cell {
  padding: 0 9px;
  border-right: 1px solid #aab4c8;
}

.date {
  margin-left: auto;
}

.overflow {
  display: flex;
  align-items: center;
  justify-content: center;
  align-self: stretch;
  width: 15px;
  margin-left: 5px;
  padding-top: 10px;
  background: #c8d1e1;
}

.overflow svg {
  width: 7px;
  height: 8px;
}
```
